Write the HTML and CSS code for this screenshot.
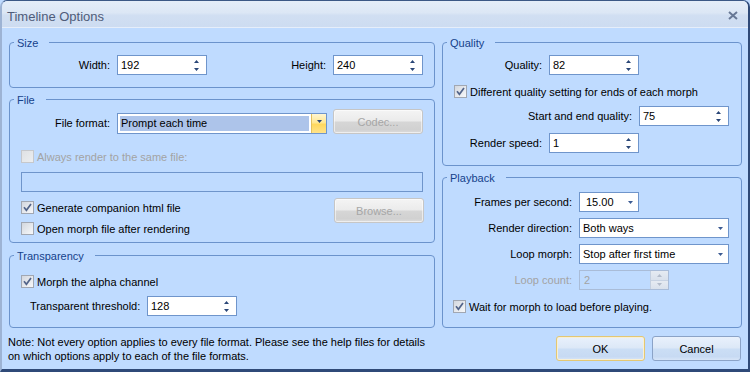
FILE: index.html
```html
<!DOCTYPE html>
<html>
<head>
<meta charset="utf-8">
<link rel="stylesheet" href="styles.css">
</head>
<body>
<div class="window">
  <div class="titlebar">
    <span class="title">Timeline Options</span>
    <svg class="close" width="10" height="9" viewBox="0 0 10 9"><path d="M1 1 L9 8 M9 1 L1 8" stroke="#687895" stroke-width="2" fill="none"/></svg>
  </div>
  <div class="content">
    <div class="cols">
      <div class="col">
        <div class="group g-size">
          <span class="legend">Size</span>
          <div class="row">
            <span class="lbl w100">Width:</span>
            <div class="spin w90"><span>192</span><svg class="sarr" width="5" height="11" viewBox="0 0 5 11"><path d="M2.5 0 L5 3 L0 3Z M0 8 L5 8 L2.5 11Z" fill="#2a4677"/></svg></div>
            <span class="lbl w119">Height:</span>
            <div class="spin w90"><span>240</span><svg class="sarr" width="5" height="11" viewBox="0 0 5 11"><path d="M2.5 0 L5 3 L0 3Z M0 8 L5 8 L2.5 11Z" fill="#2a4677"/></svg></div>
          </div>
        </div>
        <div class="group g-file">
          <span class="legend">File</span>
          <div class="row file-row1">
            <span class="lbl w100 lh21">File format:</span>
            <div class="combo-file">
              <span class="sel">Prompt each time</span>
              <span class="drop"><svg width="5" height="3" viewBox="0 0 5 3"><path d="M0 0 L5 0 L2.5 3Z" fill="#2a4677"/></svg></span>
            </div>
            <div class="btn dis codec">Codec...</div>
          </div>
          <div class="check-row always disabled"><span class="cb dis"></span><span class="ctext">Always render to the same file:</span></div>
          <div class="field"></div>
          <div class="file-row4">
            <div class="check-row gen"><span class="cb"><svg width="9" height="9" viewBox="0 0 9 9"><path d="M1 4.3 L3.4 7.3 L8 1" stroke="#52648a" stroke-width="1.7" fill="none"/></svg></span><span class="ctext">Generate companion html file</span></div>
            <div class="btn dis browse">Browse...</div>
          </div>
          <div class="check-row open"><span class="cb"></span><span class="ctext">Open morph file after rendering</span></div>
        </div>
        <div class="group g-trans">
          <span class="legend">Transparency</span>
          <div class="check-row"><span class="cb"><svg width="9" height="9" viewBox="0 0 9 9"><path d="M1 4.3 L3.4 7.3 L8 1" stroke="#52648a" stroke-width="1.7" fill="none"/></svg></span><span class="ctext">Morph the alpha channel</span></div>
          <div class="row thr-row">
            <span class="lbl-left w117">Transparent threshold:</span>
            <div class="spin w90"><span>128</span><svg class="sarr" width="5" height="11" viewBox="0 0 5 11"><path d="M2.5 0 L5 3 L0 3Z M0 8 L5 8 L2.5 11Z" fill="#2a4677"/></svg></div>
          </div>
        </div>
      </div>
      <div class="col">
        <div class="group g-quality">
          <span class="legend">Quality</span>
          <div class="row">
            <span class="lbl w99">Quality:</span>
            <div class="spin w90"><span>82</span><svg class="sarr" width="5" height="11" viewBox="0 0 5 11"><path d="M2.5 0 L5 3 L0 3Z M0 8 L5 8 L2.5 11Z" fill="#2a4677"/></svg></div>
          </div>
          <div class="check-row q-check"><span class="cb"><svg width="9" height="9" viewBox="0 0 9 9"><path d="M1 4.3 L3.4 7.3 L8 1" stroke="#52648a" stroke-width="1.7" fill="none"/></svg></span><span class="ctext">Different quality setting for ends of each morph</span></div>
          <div class="row q-row3">
            <span class="lbl w189">Start and end quality:</span>
            <div class="spin w90"><span>75</span><svg class="sarr" width="5" height="11" viewBox="0 0 5 11"><path d="M2.5 0 L5 3 L0 3Z M0 8 L5 8 L2.5 11Z" fill="#2a4677"/></svg></div>
          </div>
          <div class="row q-row4">
            <span class="lbl w99">Render speed:</span>
            <div class="spin w90"><span>1</span><svg class="sarr" width="5" height="11" viewBox="0 0 5 11"><path d="M2.5 0 L5 3 L0 3Z M0 8 L5 8 L2.5 11Z" fill="#2a4677"/></svg></div>
          </div>
        </div>
        <div class="group g-play">
          <span class="legend">Playback</span>
          <div class="row">
            <span class="lbl w129">Frames per second:</span>
            <div class="combo w60 fps"><span>15.00</span><svg width="5" height="3" viewBox="0 0 5 3"><path d="M0 0 L5 0 L2.5 3Z" fill="#3b5a92"/></svg></div>
          </div>
          <div class="row p-row">
            <span class="lbl w129">Render direction:</span>
            <div class="combo w150"><span>Both ways</span><svg width="5" height="3" viewBox="0 0 5 3"><path d="M0 0 L5 0 L2.5 3Z" fill="#3b5a92"/></svg></div>
          </div>
          <div class="row p-row">
            <span class="lbl w129">Loop morph:</span>
            <div class="combo w150"><span>Stop after first time</span><svg width="5" height="3" viewBox="0 0 5 3"><path d="M0 0 L5 0 L2.5 3Z" fill="#3b5a92"/></svg></div>
          </div>
          <div class="row p-row">
            <span class="lbl w129 grey">Loop count:</span>
            <div class="spin-dis w90"><span class="grey">2</span>
              <span class="dbtns">
                <span class="dbtn"><svg width="5" height="3" viewBox="0 0 5 3"><path d="M2.5 0 L5 3 L0 3Z" fill="#b3bccb"/></svg></span>
                <span class="dbtn"><svg width="5" height="3" viewBox="0 0 5 3"><path d="M0 0 L5 0 L2.5 3Z" fill="#b3bccb"/></svg></span>
              </span>
            </div>
          </div>
          <div class="check-row p-check"><span class="cb"><svg width="9" height="9" viewBox="0 0 9 9"><path d="M1 4.3 L3.4 7.3 L8 1" stroke="#52648a" stroke-width="1.7" fill="none"/></svg></span><span class="ctext">Wait for morph to load before playing.</span></div>
        </div>
      </div>
    </div>
    <div class="footer">
      <p class="note">Note: Not every option applies to every file format. Please see the help files for details<br>on which options apply to each of the file formats.</p>
      <div class="btn main ok">OK</div>
      <div class="btn main cancel">Cancel</div>
    </div>
  </div>
</div>
</body>
</html>
```
FILE: styles.css
```css
* { box-sizing: border-box; }
html, body { margin: 0; padding: 0; }
body {
  width: 750px;
  height: 372px;
  overflow: hidden;
  font-family: "Liberation Sans", Arial, sans-serif;
  font-size: 11px;
  color: #000;
  background: #bfdbff;
}
.window {
  width: 750px;
  height: 372px;
  display: flex;
  flex-direction: column;
  background: #bfdbff;
  border-top: 1px solid #3b5885;
  border-right: 2px solid #2f4a78;
  border-bottom: 3px solid #2f4a78;
  border-left: 2px solid #9db3d4;
  border-radius: 7px 7px 0 0;
  overflow: hidden;
}
.titlebar {
  height: 27px;
  padding: 4px 10px 0 5px;
  display: flex;
  align-items: center;
  justify-content: space-between;
  background: linear-gradient(#e4edf8, #dce7f5 45%, #d1dff2 55%, #cddcf1);
  border-bottom: 1px solid #e6eefa;
  flex: none;
}
.title { font-size: 13px; color: #4f5c79; }
.close { margin-top: -2px; }
.content {
  flex: 1;
  padding: 14px 6px 0 7px;
  display: flex;
  flex-direction: column;
}
.cols {
  display: grid;
  grid-template-columns: 426px 300px;
  column-gap: 7px;
}
.col { display: flex; flex-direction: column; }
.group {
  position: relative;
  border: 1px solid #6b93cc;
  border-radius: 4px;
  display: flex;
  flex-direction: column;
  flex: none;
}
.legend {
  position: absolute;
  top: -6px;
  left: 4px;
  padding: 0 11px 0 3px;
  line-height: 13px;
  background: #bfdbff;
  color: #15428b;
}
.g-size { height: 46px; padding-top: 12px; }
.g-file { height: 144px; margin-top: 11px; padding-top: 9px; }
.g-trans { height: 73px; margin-top: 12px; padding-top: 19px; }
.g-quality { height: 124px; padding-top: 12px; }
.g-play { height: 151px; margin-top: 11px; padding-top: 14px; }

.row { display: flex; align-items: center; }
.lbl { text-align: right; margin-right: 7px; flex: none; white-space: nowrap; }
.lbl-left { flex: none; white-space: nowrap; }
.lh21 { line-height: 21px; }
.w60 { width: 60px; }
.w90 { width: 90px; }
.w99 { width: 99px; }
.w100 { width: 100px; }
.w117 { width: 117px; }
.w119 { width: 119px; }
.w129 { width: 129px; }
.w150 { width: 150px; }
.w189 { width: 189px; }
.grey { color: #a3a3a3; }

.spin {
  display: flex;
  align-items: center;
  justify-content: space-between;
  height: 20px;
  border: 1px solid #6f95cb;
  background: #fff;
  padding: 0 7px 0 3px;
  flex: none;
}
.spin-dis {
  display: flex;
  align-items: center;
  justify-content: space-between;
  height: 20px;
  border: 1px solid #a9bcd8;
  padding: 0 0 0 4px;
  flex: none;
}
.dbtns {
  display: flex;
  flex-direction: column;
  width: 18px;
  height: 18px;
  border-left: 1px solid #c3cfe0;
}
.dbtn {
  flex: 1;
  display: flex;
  align-items: center;
  justify-content: center;
  background: linear-gradient(#e6ebf2, #d9e1ec);
  border-bottom: 1px solid #c7d2e2;
}
.dbtn:last-child { border-bottom: none; }

.combo {
  display: flex;
  align-items: center;
  justify-content: space-between;
  height: 20px;
  border: 1px solid #6f95cb;
  background: #fff;
  padding: 0 5px 0 3px;
  flex: none;
}
.combo.fps { padding-left: 6px; }
.combo-file {
  display: flex;
  width: 210px;
  height: 21px;
  border: 1px solid #6f95cb;
  background: #fff;
  flex: none;
  margin-right: 6px;
}
.combo-file .sel {
  flex: 1;
  margin: 2px;
  padding-left: 1px;
  line-height: 15px;
  background: #adc4ea;
}
.combo-file .drop {
  width: 15px;
  display: flex;
  justify-content: center;
  align-items: flex-start;
  padding-top: 6px;
  background: linear-gradient(#fff6d2, #ffe793 45%, #ffd85e 55%, #ffe38a);
  border-left: 1px solid #e3c15e;
}
.file-row1 { align-items: flex-end; height: 25px; }

.btn {
  height: 25px;
  border-radius: 3px;
  display: flex;
  align-items: center;
  justify-content: center;
  flex: none;
}
.btn.dis {
  width: 90px;
  border: 1px solid #c6c6c6;
  background: linear-gradient(#f4f4f4, #ebebeb 48%, #d6d6d6 52%, #d1d1d1 85%, #dcdcdc);
  color: #a6a6a6;
  box-shadow: inset 0 0 0 1px rgba(255,255,255,0.55);
}
.btn.main {
  width: 89px;
  border: 1px solid #8ba3c7;
  background: linear-gradient(#e9f1fc, #dce8f7 48%, #cbdef5 52%, #c7daf3 85%, #d7e5f8);
}
.btn.ok {
  border-color: #e3c774;
  box-shadow: inset 0 0 0 1px #f9f0d4;
  margin-left: auto;
}
.btn.cancel { margin-left: 7px; margin-right: 1px; }

.check-row { display: flex; align-items: center; height: 13px; margin-left: 11px; }
.cb {
  width: 13px;
  height: 13px;
  border: 1px solid #a1a7b2;
  background: linear-gradient(135deg, #d3d7de, #f7f8fa);
  display: flex;
  align-items: center;
  justify-content: center;
  flex: none;
}
.cb.dis { border-color: #c6c8cc; background: linear-gradient(135deg, #dfe1e4, #eceef0); }
.ctext { margin-left: 3px; white-space: nowrap; }
.disabled .ctext { color: #a3a3a3; }
.always { margin-top: 16px; }
.field {
  margin: 9px 0 0 11px;
  width: 402px;
  height: 20px;
  border: 1px solid #6f95cb;
  flex: none;
}
.file-row4 {
  display: flex;
  align-items: flex-start;
  height: 25px;
  margin-top: 6px;
}
.file-row4 .gen { margin-top: 3px; }
.file-row4 .browse { margin-left: auto; margin-right: 10px; }
.open { margin-top: -1px; }
.thr-row { margin-top: 8px; padding-left: 20px; }

.q-check { margin-top: 10px; }
.q-row3 { margin-top: 8px; }
.q-row4 { margin-top: 7px; }
.p-row { margin-top: 6px; }
.p-check { margin-top: 10px; margin-left: 10px; }

.footer { display: flex; align-items: flex-start; margin-top: 7px; }
.note { margin: 0 0 0 -1px; line-height: 14px; white-space: nowrap; }
.footer .btn { margin-top: 1px; }
```
